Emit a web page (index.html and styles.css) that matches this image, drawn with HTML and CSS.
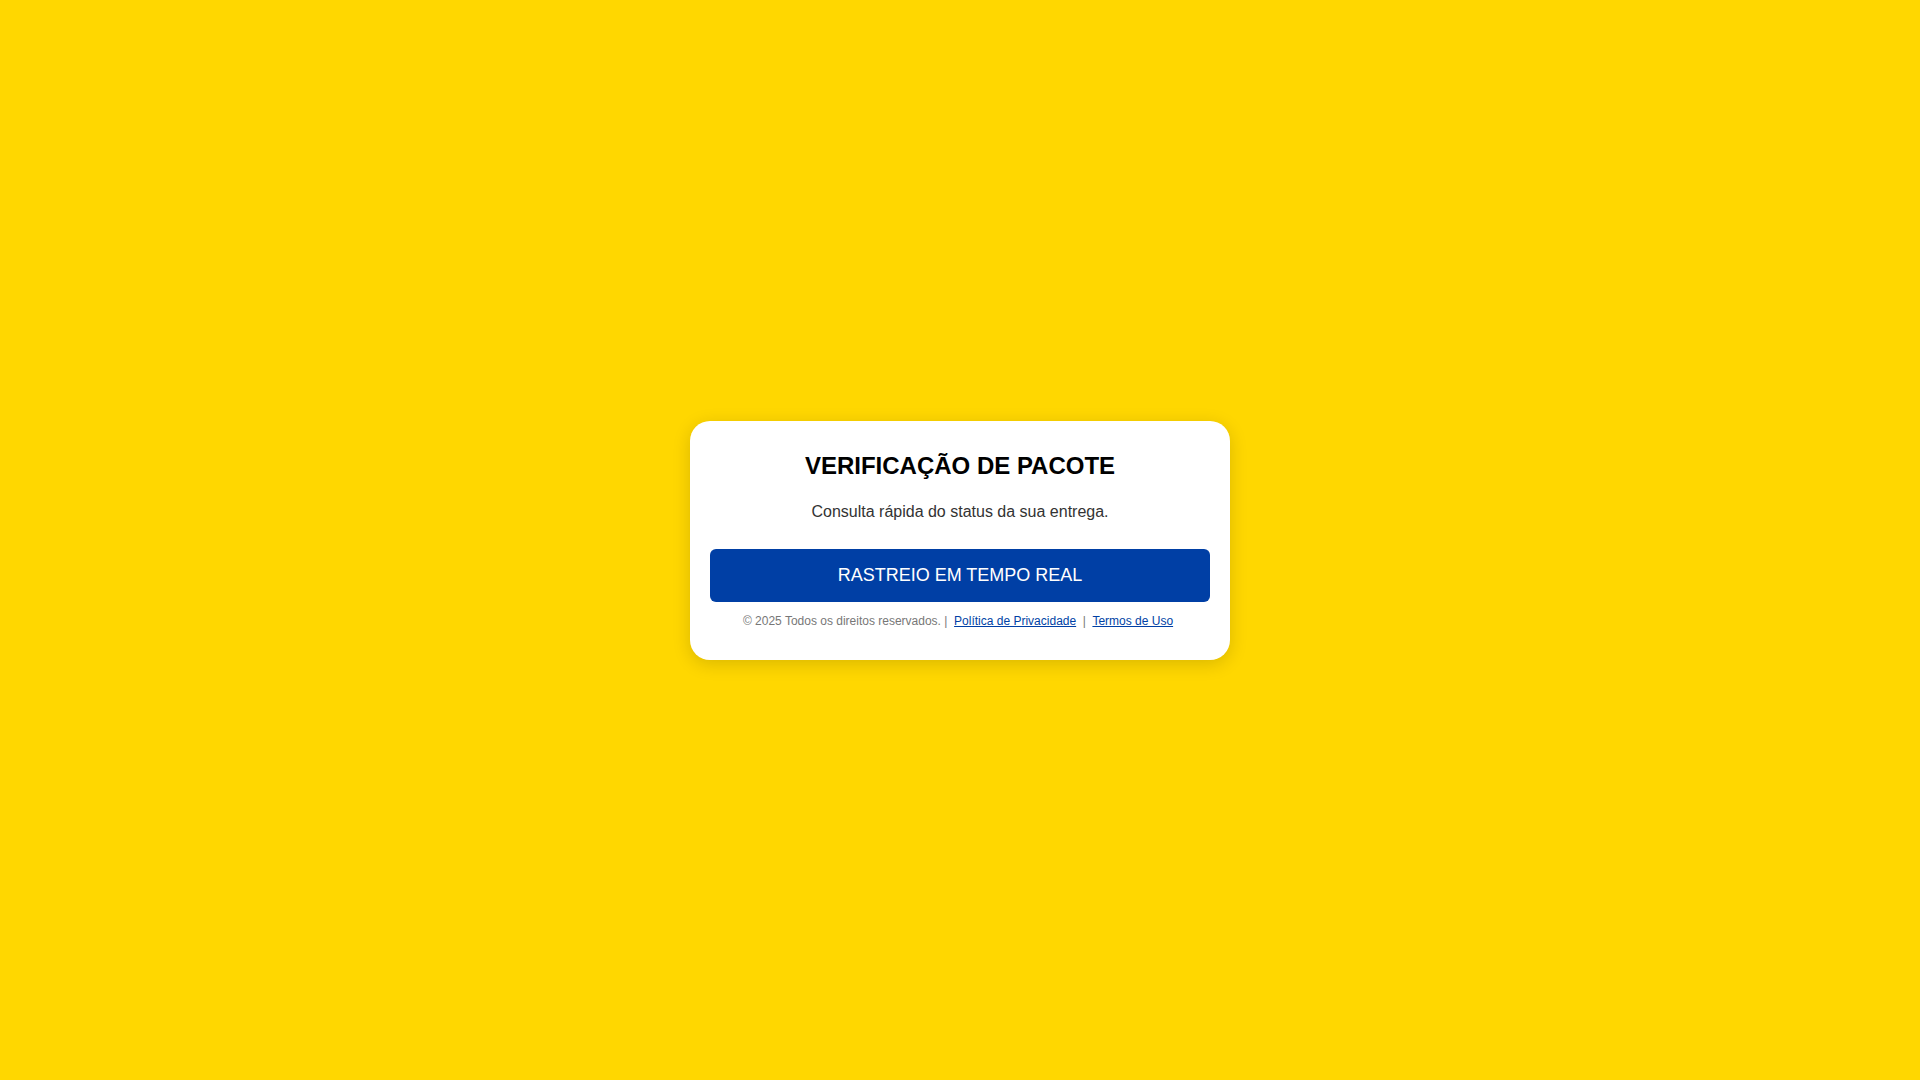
FILE: index.html
```html
<!DOCTYPE html>
<html lang="pt-BR">
<head>
<meta charset="utf-8">
<title>Verificação de Pacote</title>
<link rel="stylesheet" href="styles.css">
</head>
<body>
<main class="page">
  <section class="card">
    <h1 class="title">VERIFICAÇÃO DE PACOTE</h1>
    <p class="subtitle">Consulta rápida do status da sua entrega.</p>
    <a class="button" href="#">RASTREIO EM TEMPO REAL</a>
    <footer class="footer">© 2025 Todos os direitos reservados. |&nbsp; <a href="#">Política de Privacidade</a> &nbsp;|&nbsp; <a href="#">Termos de Uso</a></footer>
  </section>
</main>
</body>
</html>
```

FILE: styles.css
```css
html, body {
  margin: 0;
  padding: 0;
  height: 100%;
}
body {
  background: #FFD700;
  font-family: "Liberation Sans", Arial, sans-serif;
}
.page {
  min-height: 100vh;
  display: flex;
  align-items: center;
  justify-content: center;
}
.card {
  width: 540px;
  box-sizing: border-box;
  background: #fff;
  border-radius: 20px;
  padding: 31px 20px 32px;
  text-align: center;
  box-shadow: 0 4px 18px rgba(0, 0, 0, 0.15);
}
.title {
  margin: 0 0 23px;
  font-size: 24px;
  font-weight: bold;
  color: #000;
  line-height: 28px;
}
.subtitle {
  margin: 0 0 28px;
  font-size: 16px;
  line-height: 18px;
  color: #333;
}
.button {
  display: block;
  height: 53px;
  line-height: 53px;
  background: #003FA5;
  color: #fff;
  font-size: 18px;
  text-decoration: none;
  border-radius: 6px;
}
.footer {
  margin-top: 12px;
  padding-right: 4px;
  font-size: 12px;
  line-height: 14px;
  color: #777;
}
.footer a {
  color: #003FA5;
  text-decoration: underline;
}
```
